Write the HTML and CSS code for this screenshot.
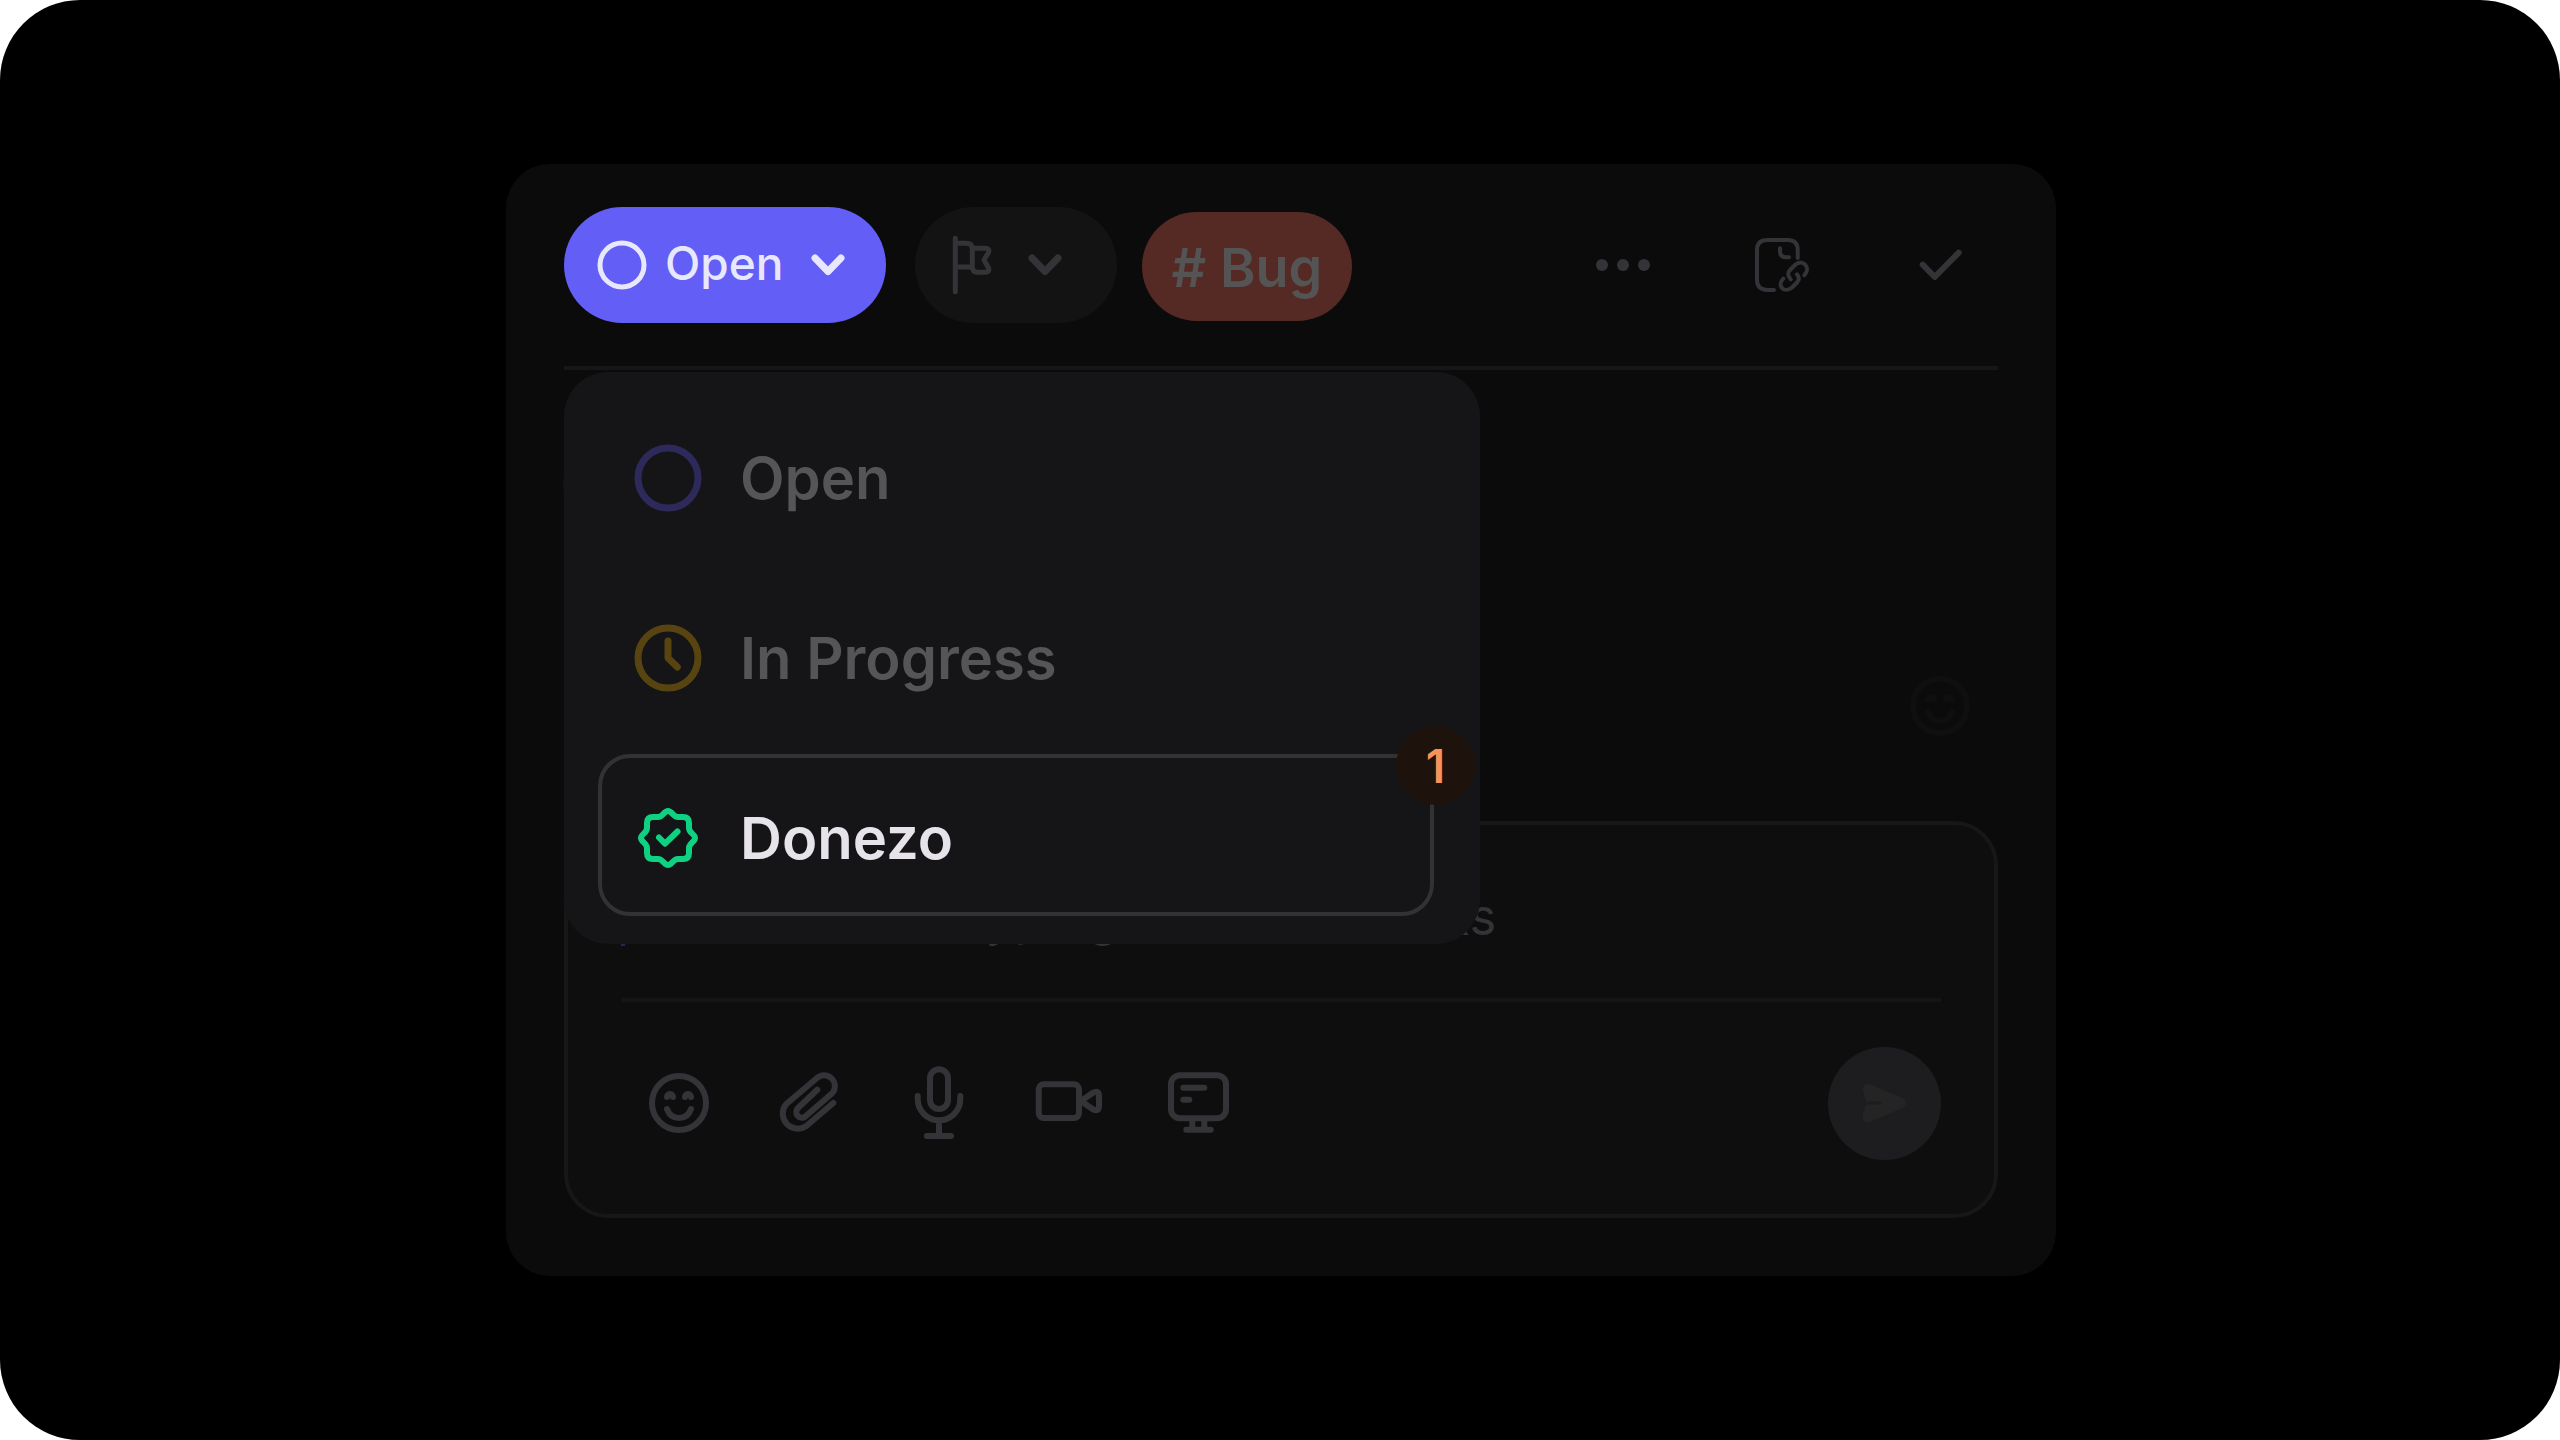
FILE: index.html
```html
<!DOCTYPE html>
<html lang="en">
<head>
<meta charset="utf-8">
<title>Task status</title>
<link rel="stylesheet" href="styles.css">
</head>
<body>
<main class="stage">
  <section class="card">
    <header class="header">
      <div class="status">
        <button class="pill pill-status" type="button" aria-haspopup="menu" aria-expanded="true">
          <svg class="ring" viewBox="0 0 50 50"><circle cx="25" cy="25" r="22"/></svg>
          <span class="pill-label">Open</span>
          <svg class="chevron" viewBox="0 0 36 36"><path d="M5 11L18 24.5L31 11"/></svg>
        </button>
        <ul class="menu" role="menu">
          <li>
            <button class="item" type="button" role="menuitem">
              <svg class="icon item-icon open" viewBox="0 0 72 72"><circle cx="36" cy="36" r="30"/></svg>
              <span>Open</span>
            </button>
          </li>
          <li>
            <button class="item" type="button" role="menuitem">
              <svg class="icon item-icon progress" viewBox="0 0 72 72"><circle cx="36" cy="36" r="30"/><path d="M36 19V36L45.300 45"/></svg>
              <span>In Progress</span>
            </button>
          </li>
          <li>
            <button class="item item-active" type="button" role="menuitem">
              <svg class="icon done" viewBox="-36 -36 72 72"><path d="M0-27C4-27 5-21 10-21H15Q21-21 21-15V-10C21-5 27-4 27 0C27 4 21 5 21 10V15Q21 21 15 21H10C5 21 4 27 0 27C-4 27-5 21-10 21H-15Q-21 21-21 15V10C-21 5-27 4-27 0C-27-4-21-5-21-10V-15Q-21-21-15-21H-10C-5-21-4-27 0-27ZM-9-.5L-3 5.700L9.500-6.500"/></svg>
              <span>Donezo</span>
              <span class="badge">1</span>
            </button>
          </li>
        </ul>
      </div>
      <button class="pill pill-flag" type="button" aria-label="Priority">
        <svg class="flag" viewBox="0 0 40 60"><path d="M3.300 3.300V56.700M3.300 8.300H14Q20.300 8.300 20.300 14V31Q20.300 37.300 25 37.300H33Q38 37 36.500 33L32 25L36.500 17.500Q38 13.300 33 13.300H20.300M3.300 32H20"/></svg>
        <svg class="chevron" viewBox="0 0 36 36"><path d="M5 11L18 24.500L31 11"/></svg>
      </button>
      <button class="pill pill-tag" type="button"># Bug</button>
      <div class="actions">
        <button class="icon-button" type="button" aria-label="More">
          <svg class="icon dots" viewBox="0 0 72 72"><circle cx="15" cy="36" r="6"/><circle cx="36" cy="36" r="6"/><circle cx="57" cy="36" r="6"/></svg>
        </button>
        <button class="icon-button" type="button" aria-label="Copy link">
          <svg class="icon thin" viewBox="0 0 72 72"><path d="M28 61H21.300Q11 60.500 11 51V21Q11 11 21.300 11H41.700Q51.700 11 51.700 21V29M34 19.300V22Q34 28.300 40 28.300H43M44.700 50.300C41 46.500 42 43 44 41L49 36C57 29 65.500 39 58.300 46.300M51 45.300C53.500 48.500 53 51.500 51 53.500L46 58.500C38 65 30.500 56.500 37.300 49.700"/></svg>
        </button>
        <button class="icon-button" type="button" aria-label="Resolve">
          <svg class="icon" viewBox="0 0 72 72"><path d="M17.700 35.700L29.700 48L53.700 23.700"/></svg>
        </button>
      </div>
    </header>

    <div class="thread">
      <span class="avatar"></span>
      <button class="icon-button react" type="button" aria-label="Add reaction">
        <svg class="icon" viewBox="0 0 72 72"><circle cx="36" cy="36" r="27"/><path d="M24 30a3 3 0 0 1 6 0M42 30a3 3 0 0 1 6 0M24 42C26 48 30 51 36 51S46 48 48 42"/></svg>
      </button>
    </div>

    <form class="composer">
      <div class="field">
        <span class="caret"></span>
        <input class="input" type="text" aria-label="Comment" placeholder="Write or start typing to add remarks">
      </div>
      <div class="toolbar">
        <button class="icon-button" type="button" aria-label="Emoji">
          <svg class="icon" viewBox="0 0 72 72"><circle cx="36" cy="36" r="27"/><path d="M24 30a3 3 0 0 1 6 0M42 30a3 3 0 0 1 6 0M24 42C26 48 30 51 36 51S46 48 48 42"/></svg>
        </button>
        <button class="icon-button" type="button" aria-label="Attach">
          <svg class="icon" viewBox="1 0 72 72"><path d="M61.300 36L34.300 59A15 15 0 0 1 14.300 37L44.700 11.300A10.800 10.800 0 0 1 60.700 25.700L33 49.700A5.600 5.600 0 0 1 26 41L45.300 22.700"/></svg>
        </button>
        <button class="icon-button" type="button" aria-label="Record audio">
          <svg class="icon" viewBox="0 0 72 72"><rect x="27" y="2.300" width="18" height="39.700" rx="9"/><path d="M14.700 29V32A21.300 21.300 0 0 0 57.300 32V29M36 54V69M24 69H48"/></svg>
        </button>
        <button class="icon-button" type="button" aria-label="Record video">
          <svg class="icon" viewBox="0 0 72 72"><rect x="5.700" y="17.300" width="40.300" height="33.700" rx="5"/><path d="M48 34L59.500 26Q66 22.500 66 29V39Q66 45.500 59.500 42Z"/></svg>
        </button>
        <button class="icon-button" type="button" aria-label="Share screen">
          <svg class="icon" viewBox="0 0 72 72"><rect x="8" y="8.300" width="55" height="43" rx="9"/><path d="M20.300 20.700H41.300M20.300 32.700H26.300M29.300 52V62M41.300 52V62M23.300 62.700H47.700"/></svg>
        </button>
        <button class="send" type="submit" aria-label="Send">
          <svg class="send-icon" viewBox="0 0 46 40"><path d="M8 1L41 15.500Q47 20 41 24.500L8 39Q-1 40 1 32L4 21.500H20V18.500H4L1 8Q0 0 8 1Z"/></svg>
        </button>
      </div>
    </form>
  </section>
</main>
</body>
</html>
```

FILE: styles.css
```css
* {
  box-sizing: border-box;
}

body {
  margin: 0;
  background: #fff;
  font-family: Inter, "Liberation Sans", sans-serif;
}

button {
  margin: 0;
  padding: 0;
  border: 0;
  background: none;
  color: inherit;
  font: inherit;
}

svg {
  display: block;
  flex: none;
  overflow: visible;
  fill: none;
  stroke: currentColor;
  stroke-linecap: round;
  stroke-linejoin: round;
}

.stage {
  display: flex;
  align-items: center;
  min-height: 100vh;
  padding: 80px 504px 80px 506px;
  border-radius: 80px;
  background: #000;
}

.card {
  flex: 1;
  min-width: 0;
  padding: 0 58px 58px;
  border-radius: 44px;
  background: #0b0b0b;
  color: #343438;
}

.header {
  display: flex;
  align-items: center;
  height: 206px;
  border-bottom: 4px solid #161616;
}

.status {
  position: relative;
}

.pill {
  display: flex;
  align-items: center;
  height: 116px;
  border-radius: 58px;
}

.pill-status {
  gap: 18px;
  width: 322px;
  padding: 0 40px 0 33px;
  background: #635ef6;
  color: #e8e8fc;
  font-size: 46px;
  font-weight: 500;
}

.pill-label {
  padding-bottom: 4px;
}

.ring {
  width: 50px;
  height: 50px;
  stroke-width: 5;
}

.chevron {
  width: 36px;
  height: 36px;
  margin-left: auto;
  stroke-width: 7;
}

.pill-flag {
  width: 202px;
  margin-left: 29px;
  padding: 0 54px 0 37px;
  background: #131313;
}

.flag {
  width: 40px;
  height: 60px;
  stroke-width: 5;
}

.pill-tag {
  justify-content: center;
  width: 210px;
  height: 109px;
  margin: 3px 0 0 25px;
  padding-top: 2px;
  background: #552a25;
  color: #545454;
  font-size: 54px;
  font-weight: 600;
}

.actions {
  display: flex;
  gap: 87px;
  margin: 0 21px 0 auto;
}

.icon {
  width: 72px;
  height: 72px;
  stroke-width: 6;
}

.thin {
  stroke-width: 4;
}

.dots {
  fill: currentColor;
  stroke: none;
}

.menu {
  position: absolute;
  top: 165px;
  left: 0;
  z-index: 1;
  display: grid;
  gap: 18px;
  width: 916px;
  margin: 0;
  padding: 22px 46px 28px 34px;
  border-radius: 44px;
  background: #151517;
  list-style: none;
}

.item {
  position: relative;
  display: flex;
  align-items: center;
  gap: 36px;
  width: 100%;
  height: 162px;
  padding: 6px 30px 0;
  border: 4px solid transparent;
  border-radius: 32px;
  color: #555557;
  font-size: 58px;
  font-weight: 600;
}

.item-active {
  border-color: #323232;
  color: #e6e4ea;
}

.item-icon {
  stroke-width: 7;
}

.open {
  color: #2d295b;
}

.progress {
  color: #574410;
}

.done {
  color: #0fd182;
}

.badge {
  position: absolute;
  top: -32px;
  right: -45px;
  display: grid;
  place-items: center;
  width: 79px;
  height: 79px;
  border-radius: 50%;
  background: #1e120c;
  color: #f7935a;
  font-size: 46px;
}

.thread {
  display: flex;
  justify-content: space-between;
  height: 451px;
  padding: 79px 22px 79px 0;
}

.avatar {
  width: 72px;
  height: 72px;
  margin-left: -1px;
  border-radius: 50%;
  background: #161618;
}

.react {
  align-self: flex-end;
  color: #0f0f0f;
}

.composer {
  padding: 10px 53px;
  border: 4px solid #171717;
  border-radius: 44px;
  background: #0e0e0e;
}

.field {
  display: flex;
  align-items: center;
  height: 167px;
  border-bottom: 4px solid #151515;
}

.caret {
  width: 4px;
  height: 58px;
  background: #2a2556;
}

.input {
  flex: 1;
  min-width: 0;
  padding: 0 0 0 14px;
  border: 0;
  outline: 0;
  background: none;
  color: #343438;
  font: 51px Inter, "Liberation Sans", sans-serif;
}

.input::placeholder {
  color: #343438;
  opacity: 1;
}

.toolbar {
  display: flex;
  align-items: center;
  gap: 58px;
  height: 202px;
  padding-left: 22px;
}

.send {
  display: grid;
  place-items: center;
  width: 113px;
  height: 113px;
  margin-left: auto;
  border-radius: 50%;
  background: #1d1d1f;
  color: #242424;
}

.send-icon {
  width: 46px;
  height: 40px;
  fill: currentColor;
  stroke: none;
}
```
